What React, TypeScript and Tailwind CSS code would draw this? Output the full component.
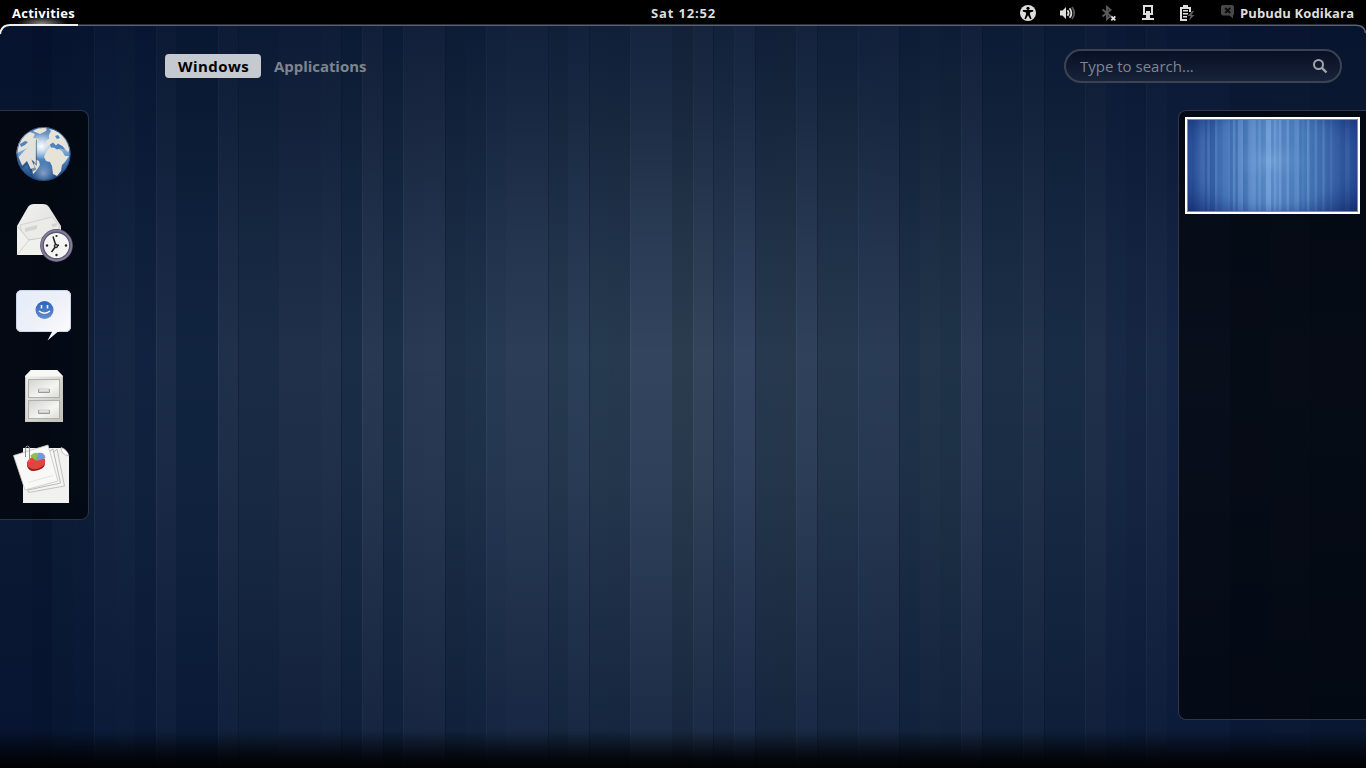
import React from "react";

type Band = [number, string, number];

// start x, colour at mid height, relative lightness
const bands: Band[] = [
  [0, "#0c1a36", 0], [32, "#0a1731", -0.5], [52, "#0d1c37", 0], [73, "#0e1e39", 0.2],
  [94, "#142543", 0.5], [115, "#152743", 0.6], [135, "#10223f", -0.4], [156, "#1b2c48", 0.8], [176, "#11243f", -0.8],
  [218, "#1f304a", 0.8], [238, "#1a2c45", -0.1], [279, "#202f4a", 0.3], [321, "#22324c", 0.4], [341, "#1a2d46", -0.8],
  [362, "#293852", 0.8], [383, "#1b2f47", -0.8], [403, "#2a3953", 0.8], [424, "#2b3a54", 0.9], [445, "#1d3047", -0.9],
  [465, "#1f334b", -0.7], [486, "#273a54", 0.3], [506, "#2b3d57", 0.6], [548, "#25394f", -0.6], [568, "#2c3f58", 0.3],
  [589, "#263a50", -0.8], [609, "#26394f", -0.7], [630, "#33455e", 1], [672, "#2b3c4f", -0.7], [693, "#33445b", 0.6],
  [713, "#2b3e55", -0.4], [734, "#32445f", 0.8], [755, "#26394e", -0.7], [779, "#27394c", -0.5], [796, "#2f415b", 0.8],
  [817, "#25384e", -0.6], [858, "#293c55", 0.3], [878, "#2a3b55", 0.6], [899, "#1e3249", -0.8], [920, "#22354b", -0.2],
  [940, "#1f3348", -0.6], [961, "#2b3a55", 1], [982, "#1c2f47", -0.6], [1023, "#22344c", 0.6], [1044, "#192c45", -0.5],
  [1085, "#202f4a", 0.7], [1106, "#172946", -0.4], [1126, "#152643", -0.6], [1146, "#1a2b48", 0.4], [1167, "#152545", -0.3],
  [1230, "#11203c", -0.7], [1270, "#13213c", 0.4], [1310, "#101e38", -0.3],
];

const edges: [number, boolean][] = [
  [94, true], [156, true], [218, true], [238, false], [341, false], [362, true], [383, false], [403, true],
  [445, false], [486, true], [548, false], [589, false], [630, true], [693, true], [713, false], [734, true],
  [755, false], [796, true], [817, false], [858, true], [899, false], [961, true], [982, false], [1023, true], [1044, false],
  [1085, true], [1146, true],
];

function bandWidth(i: number) {
  return (i + 1 < bands.length ? bands[i + 1][0] : 1366) - bands[i][0];
}

function Wallpaper() {
  return (
    <svg className="absolute inset-0 h-full w-full" viewBox="0 0 1366 768" shapeRendering="crispEdges">
      <defs>
        <linearGradient id="shade" x1="0" y1="0" x2="0" y2="1">
          <stop offset="0" stopColor="#020d29" stopOpacity=".64" />
          <stop offset=".15" stopColor="#031029" stopOpacity=".46" />
          <stop offset=".33" stopColor="#04122c" stopOpacity=".17" />
          <stop offset=".46" stopColor="#04122c" stopOpacity="0" />
          <stop offset=".62" stopColor="#04122c" stopOpacity=".08" />
          <stop offset=".93" stopColor="#020f2c" stopOpacity=".44" />
          <stop offset="1" stopColor="#020f2c" stopOpacity=".52" />
        </linearGradient>
        <linearGradient id="bottom" x1="0" y1="0" x2="0" y2="1">
          <stop offset="0" stopColor="#000" stopOpacity="0" />
          <stop offset=".75" stopColor="#000" stopOpacity=".8" />
          <stop offset="1" stopColor="#000" stopOpacity=".95" />
        </linearGradient>
      </defs>
      {bands.map(([x, c], i) => (
        <rect key={x} x={x} y="0" width={bandWidth(i)} height="768" fill={c} />
      ))}
      {edges.map(([x, light]) => (
        <rect key={x} x={x} y="0" width="1" height="768" fill={light ? "#7890ae" : "#020a1c"} opacity={light ? 0.12 : 0.28} />
      ))}
      <rect width="1366" height="768" fill="url(#shade)" />
      <rect y="730" width="1366" height="38" fill="url(#bottom)" />
    </svg>
  );
}

function Thumbnail() {
  return (
    <svg className="block h-full w-full" viewBox="0 0 1366 768" preserveAspectRatio="none">
      <defs>
        <linearGradient id="tb">
          <stop offset="0" stopColor="#2c5298" />
          <stop offset=".2" stopColor="#4271b4" />
          <stop offset=".48" stopColor="#6698d2" />
          <stop offset=".7" stopColor="#4e80be" />
          <stop offset="1" stopColor="#2c5096" />
        </linearGradient>
        <radialGradient id="tg" cx=".49" cy=".45" r=".78">
          <stop offset="0" stopColor="#8dbce8" stopOpacity=".35" />
          <stop offset=".35" stopColor="#5a8ccb" stopOpacity="0" />
          <stop offset=".6" stopColor="#173a86" stopOpacity=".1" />
          <stop offset="1" stopColor="#0a1d58" stopOpacity=".8" />
        </radialGradient>
      </defs>
      <rect width="1366" height="768" fill="url(#tb)" />
      {bands.map(([x, , d], i) => (
        <rect key={x} x={x} y="0" width={bandWidth(i)} height="768" fill={d > 0 ? "#a9c8f5" : "#0c3478"} opacity={Math.abs(d) * 0.2} />
      ))}
      <rect width="1366" height="768" fill="url(#tg)" />
    </svg>
  );
}

const sym = "block h-4 w-4 shrink-0";

function StatusIcons() {
  return (
    <>
      <svg className={sym} viewBox="0 0 16 16">
        <circle cx="8" cy="8" r="8" fill="#dededc" />
        <circle cx="8" cy="3.3" r="1.6" fill="#000" />
        <path d="M2.8 5.1h10.4v1.5L10 7.5v2l1.6 4.2-1.4.6L8 10.3l-2.200 4-1.400-.6L6 9.500v-2l-3.200-.9z" fill="#000" />
      </svg>
      <svg className={sym} viewBox="0 0 16 16" fill="none">
        <path d="M0 5.500h2.500L6 2v12l-3.500-3.500H0z" fill="#dededc" />
        <path d="M7.500 5.200q2.200 2.800 0 5.600M9.600 3.200q3.600 4.800 0 9.600" stroke="#dededc" strokeWidth="1.800" />
        <path d="M12 2q4.400 6 0 12" stroke="#555" strokeWidth="1.900" />
      </svg>
      <svg className={sym} viewBox="0 0 16 16" fill="none">
        <path d="M2.500 4.500l8 6.500L7 14V2l3.500 3-8 6.500" stroke="#5a5a5a" strokeWidth="1.900" />
        <path d="M11.300 11.300l4 4M15.300 11.300l-4 4" stroke="#dededc" strokeWidth="1.900" />
      </svg>
      <svg className={sym} viewBox="0 0 16 16" fill="#dededc">
        <path fillRule="evenodd" d="M3 0h10v10H3zM5 2v6h6V2z" />
        <path d="M6 10h4v3h4v2H2v-2h4zM6 6h4v3H6z" />
      </svg>
      <svg className={sym} viewBox="0 0 16 16">
        <path d="M3 0h5v2h3v5H9V4H2v10h5v2H0V2h3z" fill="#dededc" />
        <path d="M3 5h5v1.500H3zM3 8h5v1.500H3zM3 11h4v1.500H3z" fill="#dededc" />
        <path d="M12 6L7.500 11h3l-1.500 4.500L14.500 10h-3L14 6z" fill="#5c5c5c" />
      </svg>
      <svg className={sym} viewBox="0 0 16 16">
        <path d="M3 0h9q2 0 2 2v6.500q0 2-1 2v3L9.500 10.500H3q-2 0-2-2V2q0-2 2-2z" fill="#484848" />
        <path d="M5.200 3l5 5M10.200 3l-5 5" stroke="#0a0a0a" strokeWidth="1.800" />
      </svg>
    </>
  );
}

function GlobeIcon() {
  return (
    <svg className="block h-16 w-16" viewBox="0 0 64 64">
      <defs>
        <linearGradient id="sea" x1="0" y1="0" x2="0" y2="1">
          <stop offset="0" stopColor="#5580b4" /><stop offset=".35" stopColor="#9cc0e3" />
          <stop offset=".6" stopColor="#4d85c0" /><stop offset="1" stopColor="#153c76" />
        </linearGradient>
        <radialGradient id="seaGlow" cx=".46" cy=".36" r=".24">
          <stop offset="0" stopColor="#fff" stopOpacity=".95" /><stop offset="1" stopColor="#fff" stopOpacity="0" />
        </radialGradient>
        <radialGradient id="globeLow" cx=".5" cy=".86" r=".22">
          <stop offset="0" stopColor="#d9e7f7" stopOpacity=".5" /><stop offset="1" stopColor="#d9e7f7" stopOpacity="0" />
        </radialGradient>
        <clipPath id="gc"><circle cx="32.500" cy="32" r="27" /></clipPath>
      </defs>
      <circle cx="32.500" cy="32" r="27" fill="url(#sea)" />
      <g clipPath="url(#gc)">
        <circle cx="32.500" cy="32" r="27" fill="url(#seaGlow)" />
        <circle cx="32.500" cy="32" r="27" fill="url(#globeLow)" />
        <g fill="#e6e3d9">
          <path d="M5 27L9 17 14 12 19 10 24 12 22 16 28 17 26 21 20 22 16 26 12 28 8 30 5 32z" />
          <path d="M22 9L27 6 36 5 35 9 29 12zM38 13l2-4-2-2 5 1 6 3 6 7 4 9-2 3-4-4-3 1-2-3-4 1-4-3-3 2-3-1 1-4 3-2z" />
          <path d="M24 37l4 2 1 4-4 6-3 3-1-5zM35 30l4-5 7 1 5 3 3 5 4 0-4 6-3 3-1 6-4 5-4-2-1-8-2-4-4-1-2-4z" />
        </g>
        <path d="M39 22.500l3-2 3 3 2-2 5 3 2 3-5-1-3 1-3-2-3 0zM44 14l3-1 2 3-3 1zM9 22l5-3 3 1-3 3-4 2z" fill="#4f83bd" />
      </g>
      <circle cx="32.500" cy="32" r="26.500" fill="none" stroke="#1b4178" strokeOpacity=".7" />
      <path d="M26 17v27l-4-3 3.500 6.500-6 3-3.500-8-5 4.500L6.500 36z" fill="#1c3d68" opacity=".5" />
      <path d="M24.800 16.500V41l-4.400-3.500 3.200 8-3.900 1.600-3.700-8-4.800 4.700L7.500 35z" fill="#e2e1de" />
    </svg>
  );
}

function MailIcon() {
  return (
    <svg className="block h-16 w-16" viewBox="0 0 64 64">
      <defs>
        <linearGradient id="paper" x1="0" y1="0" x2="1" y2="1">
          <stop offset="0" stopColor="#f4f4f2" /><stop offset="1" stopColor="#d6d6d2" />
        </linearGradient>
      </defs>
      <path d="M6 24L17 5q2-3 6-3h9q4 0 6 3l12 19v29H6z" fill="url(#paper)" />
      <path d="M9 23L41 15l8 9-7 11-29 4z" fill="#ebebe8" stroke="#c8c8c4" strokeWidth=".7" />
      <path d="M14 26l12-3v4l-12 3zM41 22l5-1v3l-5 1z" fill="#d4d4d1" />
      <path d="M6 24l12 14L42 34l8-10v29H6z" fill="#f0f0ed" />
      <path d="M6 24l12 14L42 34l8-10" fill="none" stroke="#c2c2be" strokeWidth=".8" />
      <path d="M6 53l12-15" stroke="#cacac6" strokeWidth=".8" />
      <circle cx="45.500" cy="43.500" r="14.500" fill="#f4f4f2" stroke="#5d5670" strokeWidth="3.800" />
      <circle cx="45.500" cy="43.500" r="14.800" fill="none" stroke="#857e9a" strokeWidth="1.800" />
      <g fill="#222"><circle cx="45.500" cy="34" r="1.100" /><circle cx="45.500" cy="53" r="1.200" /><circle cx="36" cy="43.500" r="1.200" /><circle cx="55" cy="43.500" r="1.200" /></g>
      <path d="M45 44L40.500 50M45 44L42 34.500M45 44l3-1" stroke="#222" strokeWidth="1.500" />
      <circle cx="45" cy="44" r="1.800" fill="#888" stroke="#222" />
    </svg>
  );
}

function ChatIcon() {
  return (
    <svg className="block h-16 w-16" viewBox="0 0 64 64">
      <defs>
        <linearGradient id="bubble" x1="0" y1="0" x2="1" y2="1">
          <stop offset="0" stopColor="#e4edfc" /><stop offset=".5" stopColor="#edf0f7" /><stop offset="1" stopColor="#fff" />
        </linearGradient>
        <linearGradient id="face" x1="0" y1="0" x2="0" y2="1">
          <stop offset="0" stopColor="#2a63bd" /><stop offset="1" stopColor="#658dce" />
        </linearGradient>
      </defs>
      <path d="M11 8h43q6 0 6 6v30q0 6-6 6h-7.500L36.500 58.500 41 50H11q-6 0-6-6V14q0-6 6-6z" fill="url(#bubble)" />
      <path d="M11 49.500h30M48 49.500h6q5.500 0 5.500-5.500V14q0-5.500-5.500-5.500H11q-5.500 0-5.500 5.500v30q0 5.500 5.500 5.500" fill="none" stroke="#cbd5e8" />
      <circle cx="33.500" cy="28" r="9" fill="url(#face)" />
      <path d="M30.500 23v3.500M36.500 23v3.500" stroke="#e9f2ff" strokeWidth="1.600" />
      <path d="M28 29q5.500 4.500 11 0" fill="none" stroke="#fff" strokeWidth="1.500" />
    </svg>
  );
}

function CabinetIcon() {
  return (
    <svg className="block h-16 w-16" viewBox="0 0 64 64">
      <defs>
        <linearGradient id="cab" x1="0" y1="0" x2="1" y2="1">
          <stop offset="0" stopColor="#f2f2ee" /><stop offset="1" stopColor="#bebdb8" />
        </linearGradient>
        <linearGradient id="drawer" x1="0" y1="0" x2="1" y2="1">
          <stop offset="0" stopColor="#d2d2ce" /><stop offset=".6" stopColor="#f5f5f2" /><stop offset="1" stopColor="#dadad6" />
        </linearGradient>
      </defs>
      <path d="M20 8h26l6 6v46H14V14z" fill="url(#cab)" />
      <path d="M20 8h26l6 6.500H14z" fill="#f8f8f6" />
      <path d="M14.500 15v44.500h37V15" fill="none" stroke="#c6c6c1" />
      <rect x="17.500" y="17.500" width="31" height="18" fill="url(#drawer)" stroke="#b0b0ab" />
      <rect x="17.500" y="38.500" width="31" height="18" fill="url(#drawer)" stroke="#b0b0ab" />
      {[27, 48].map((y) => (
        <g key={y}>
          <path d={`M27.500 ${y}v3.500h11v-3.500`} fill="none" stroke="#9a9a95" strokeWidth="1" />
          <rect x="28" y={y} width="10" height="2.500" fill="#e4e4e1" stroke="#bbb" strokeWidth=".6" />
        </g>
      ))}
    </svg>
  );
}

function DocsIcon() {
  return (
    <svg className="block h-16 w-16" viewBox="0 0 64 64">
      <path d="M12 6h39l7 8v47H12z" fill="#f1f1ef" />
      <path d="M50 5.500q0 7 8 8.500-2-7-8-8.500z" fill="#fff" stroke="#a9a9a6" strokeWidth=".7" />
      <path d="M46 7l7.500 37-36 6.500-3-12z" fill="#f3f3f1" stroke="#b5b5b2" strokeWidth=".8" />
      <path d="M42 7l7.500 34L17 48l-5-18z" fill="#f6f6f4" stroke="#aaaaa7" strokeWidth=".8" />
      <path d="M2.500 13.500L37 3l10 36L14 48z" fill="#f8f8f6" stroke="#c4c4c1" strokeWidth=".8" />
      <path d="M16 20v4q2 6.500 10 4.500 8-2 8-7.500v-4z" fill="#971a1a" />
      <ellipse cx="25" cy="20.500" rx="9.300" ry="6.500" fill="#e0453f" transform="rotate(-14 25 20)" />
      <path d="M25.500 19L19 14q4-4 7.500-3z" fill="#87c34c" />
      <path d="M25.500 19L26.500 11q7-1.500 8 5z" fill="#7398dc" />
      <path d="M17 40.500l25-7" stroke="#dededb" strokeWidth=".8" />
      <path d="M18.500 20V7q0-3-2-3t-2 3v8" fill="none" stroke="#8f8f8f" strokeWidth="1" />
    </svg>
  );
}

function TopBar() {
  return (
    <header className="flex h-[25px] shrink-0 items-center justify-between bg-black pr-3 text-[13px] font-bold text-[#dededc]">
      <div className="flex h-full w-[86px] items-center bg-[radial-gradient(ellipse_26px_8px_at_42px_24px,#8a8a8a,transparent)] pl-3 tracking-[0.25px] whitespace-nowrap text-white">
        <span className="mt-0.5">Activities</span>
      </div>
      <div className="mt-0.5 ml-[565px] w-[66px] tracking-[0.85px] whitespace-nowrap">Sat 12:52</div>
      <div className="ml-auto flex items-center gap-6">
        <StatusIcons />
        <span className="mt-0.5 -ml-5 w-[114px] tracking-[0.13px] whitespace-nowrap">Pubudu Kodikara</span>
      </div>
    </header>
  );
}

export default function App() {
  return (
    <div className="relative flex h-[768px] w-[1366px] flex-col overflow-hidden font-['Open_Sans',sans-serif]">
      <Wallpaper />
      <div className="relative flex min-h-0 flex-1 flex-col">
        <TopBar />
        <div className="flex h-[85px] shrink-0 items-start justify-between pr-6 pl-[165px]">
          <nav className="mt-[29px] flex h-6 items-center text-[15px] font-bold whitespace-nowrap">
            <span className="flex h-6 w-24 items-center rounded bg-[#c5c9d0] pl-[13px] tracking-[0.45px] text-black">Windows</span>
            <span className="ml-[13px] tracking-[-0.05px] text-[#7c868b]">Applications</span>
          </nav>
          <div className="mt-6 flex h-[34px] w-[278px] items-center justify-between rounded-full border-2 border-[#3b4352] bg-linear-to-b from-[#081025] to-[#182238] pr-3 pl-3.5 text-[15px] text-[#7e8591]">
            <span className="whitespace-nowrap">Type to search...</span>
            <svg className="h-4 w-4" viewBox="0 0 16 16" fill="none" stroke="#a0a5ac">
              <circle cx="6.500" cy="6.500" r="4.500" strokeWidth="2" />
              <path d="M9.700 9.700L14.500 14.500" strokeWidth="2.400" />
            </svg>
          </div>
        </div>
        <main className="flex flex-1 items-start justify-between">
          <aside className="flex h-[410px] w-[89px] flex-col gap-4 rounded-r-lg border border-l-0 border-[#2b3340] bg-black/62 pt-[11px] pl-[11px]">
            <GlobeIcon />
            <MailIcon />
            <ChatIcon />
            <CabinetIcon />
            <DocsIcon />
          </aside>
          <aside className="h-[610px] w-[188px] rounded-l-lg border border-r-0 border-[#303743] bg-black/62 pt-1.5 pl-1.5">
            <div className="h-[97px] w-[175px] border-2 border-white bg-[#858b94] p-px">
              <Thumbnail />
            </div>
          </aside>
        </main>
      </div>
      <svg className="absolute top-6 left-0 h-3 w-full" viewBox="0 0 1366 12" fill="none">
        <path d="M0 0h10Q1 1 0 11zM1366 0h-9q8 1 9 9z" fill="#000" />
        <path d="M76 1.200H1356Q1365 1.500 1365.500 9" stroke="#596272" strokeWidth="1.500" />
        <path d="M0 10Q1.500 1 10 1H78" stroke="#eeeef0" strokeWidth="2" />
      </svg>
    </div>
  );
}
